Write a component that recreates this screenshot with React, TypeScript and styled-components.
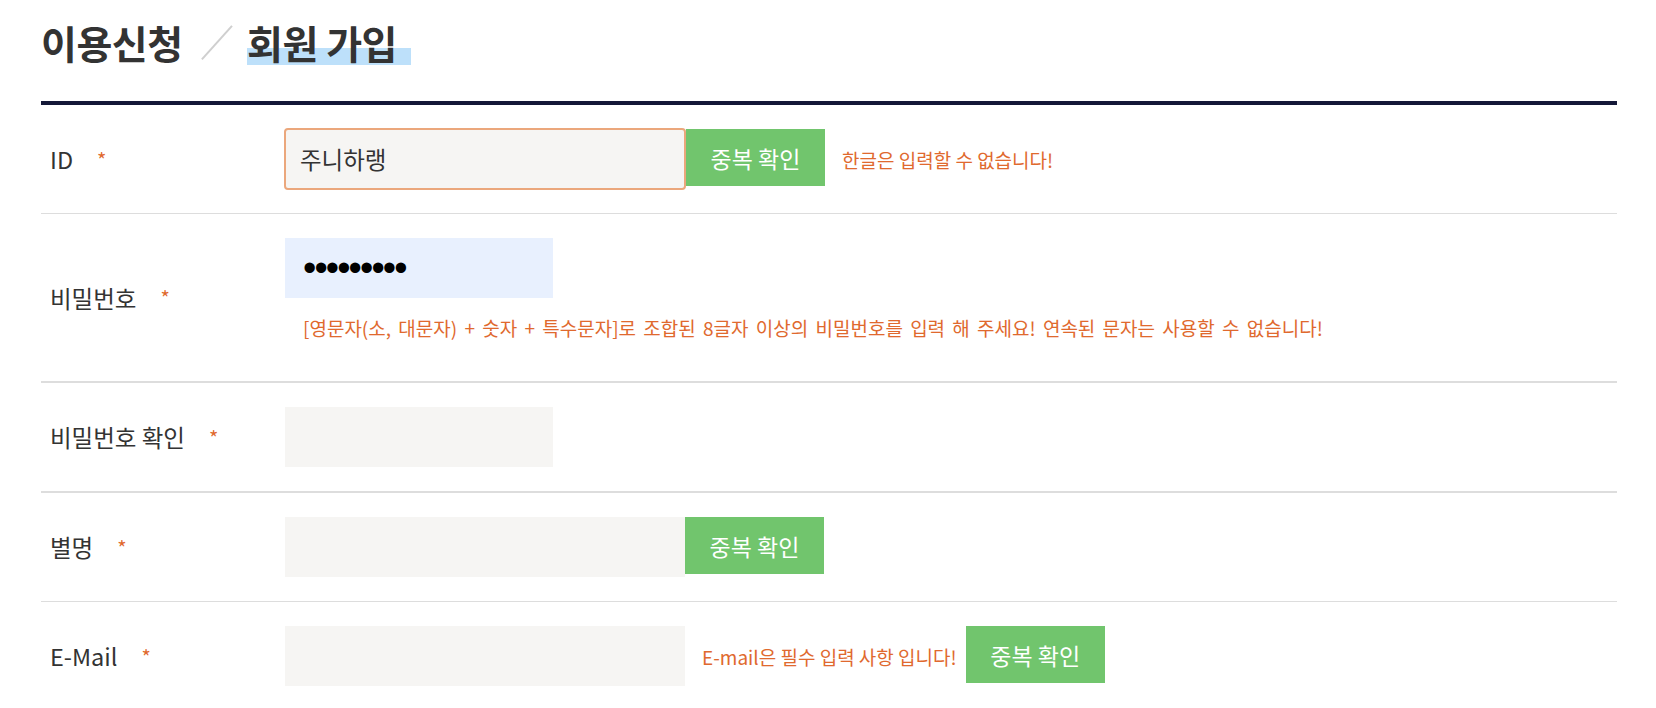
import { createGlobalStyle, styled } from "styled-components";

const GlobalStyle = createGlobalStyle`
  * { box-sizing: border-box; }
  html, body { margin: 0; overflow: hidden; background: #fff; }
  body {
    font-family: "Noto Sans CJK KR", "Noto Sans", sans-serif;
    color: #333;
  }
`;

const Page = styled.div`
  padding: 17px 39px 0 41px;
`;

const Header = styled.div`
  display: flex;
  align-items: center;
  height: 50px;
  margin-bottom: 34px;
`;

const Title = styled.h2`
  margin: 0;
  display: flex;
  align-items: center;
  font-size: 39px;
  font-weight: 700;
  line-height: 50px;
  color: #333;
  letter-spacing: -0.5px;
`;

const Slash = styled.span`
  display: inline-block;
  width: 1.5px;
  height: 45px;
  background: #cfcfcf;
  transform: rotate(42deg);
  margin: 0 30px 0 33px;
`;

const Current = styled.span`
  padding-right: 14px;
  background: linear-gradient(
    to bottom,
    transparent 62%,
    #bde0fa 62%,
    #bde0fa 96%,
    transparent 96%
  );
`;

const Form = styled.form`
  border-top: 4px solid #141838;
`;

const Row = styled.div<{ $thick?: boolean }>`
  display: flex;
  padding: 24px 0;
  border-bottom: ${(p) => (p.$thick ? 2 : 1)}px solid #dddddd;
`;

const LabelCell = styled.div`
  width: 244px;
  flex-shrink: 0;
  padding-left: 9px;
  display: flex;
  align-items: center;
  font-size: 23.5px;
  color: #333;
`;

const Required = styled.span`
  color: #e0692e;
  font-size: 20px;
  margin-left: 24px;
`;

const FieldCell = styled.div`
  flex: 1;
  display: flex;
  flex-direction: column;
`;

const FieldLine = styled.div`
  display: flex;
  align-items: center;
`;

const TextInput = styled.input<{ $w: number; $focus?: boolean; $filled?: boolean }>`
  width: ${(p) => p.$w}px;
  height: ${(p) => (p.$focus ? 62 : 60)}px;
  margin: ${(p) => (p.$focus ? "-1px 0 -1px -1px" : "0")};
  padding: 0 ${(p) => (p.$focus ? 14 : 18)}px;
  border: ${(p) => (p.$focus ? "2px solid #eba77c" : "none")};
  border-radius: ${(p) => (p.$focus ? 4 : 0)}px;
  background: ${(p) => (p.$filled ? "#e8f0fe" : "#f6f5f3")};
  font-family: "Noto Sans CJK KR", "Noto Sans", sans-serif;
  font-size: 23.5px;
  color: #333;
  outline: none;
  flex-shrink: 0;
  &[type="password"] {
    color: #000;
    font-family: "Liberation Sans", sans-serif;
    font-size: 38px;
    letter-spacing: -1.9px;
  }
`;

const CheckButton = styled.button`
  width: 139px;
  height: 57px;
  align-self: flex-start;
  flex-shrink: 0;
  border: none;
  background: #71c56d;
  color: #fff;
  font-family: "Noto Sans CJK KR", "Noto Sans", sans-serif;
  font-size: 23px;
  cursor: pointer;
`;

const Message = styled.span<{ $right?: number }>`
  margin: 0 ${(p) => p.$right ?? 17}px 0 17px;
  color: #e0692e;
  font-size: 19px;
  white-space: nowrap;
`;

const Hint = styled.p`
  margin: 17px 0 16px 18px;
  line-height: 26px;
  color: #e0692e;
  font-size: 19px;
  word-spacing: 3px;
  white-space: nowrap;
`;

function Label({ text }: { text: string }) {
  return (
    <LabelCell>
      {text}
      <Required>*</Required>
    </LabelCell>
  );
}

export default function App() {
  return (
    <Page>
      <GlobalStyle />
      <Header>
        <Title>
          이용신청
          <Slash />
          <Current>회원 가입</Current>
        </Title>
      </Header>
      <Form onSubmit={(e) => e.preventDefault()}>
        <Row>
          <Label text="ID" />
          <FieldCell>
            <FieldLine>
              <TextInput $w={402} $focus defaultValue="주니하랭" />
              <CheckButton type="button">중복 확인</CheckButton>
              <Message>한글은 입력할 수 없습니다!</Message>
            </FieldLine>
          </FieldCell>
        </Row>
        <Row $thick>
          <Label text="비밀번호" />
          <FieldCell>
            <FieldLine>
              <TextInput $w={268} $filled type="password" defaultValue="abcdefghi" />
            </FieldLine>
            <Hint>
              [영문자(소, 대문자) + 숫자 + 특수문자]로 조합된 8글자 이상의 비밀번호를 입력 해 주세요! 연속된 문자는 사용할 수 없습니다!
            </Hint>
          </FieldCell>
        </Row>
        <Row $thick>
          <Label text="비밀번호 확인" />
          <FieldCell>
            <FieldLine>
              <TextInput $w={268} type="password" />
            </FieldLine>
          </FieldCell>
        </Row>
        <Row>
          <Label text="별명" />
          <FieldCell>
            <FieldLine>
              <TextInput $w={400} />
              <CheckButton type="button">중복 확인</CheckButton>
            </FieldLine>
          </FieldCell>
        </Row>
        <Row>
          <Label text="E-Mail" />
          <FieldCell>
            <FieldLine>
              <TextInput $w={400} type="email" />
              <Message $right={9}>E-mail은 필수 입력 사항 입니다!</Message>
              <CheckButton type="button">중복 확인</CheckButton>
            </FieldLine>
          </FieldCell>
        </Row>
      </Form>
    </Page>
  );
}
